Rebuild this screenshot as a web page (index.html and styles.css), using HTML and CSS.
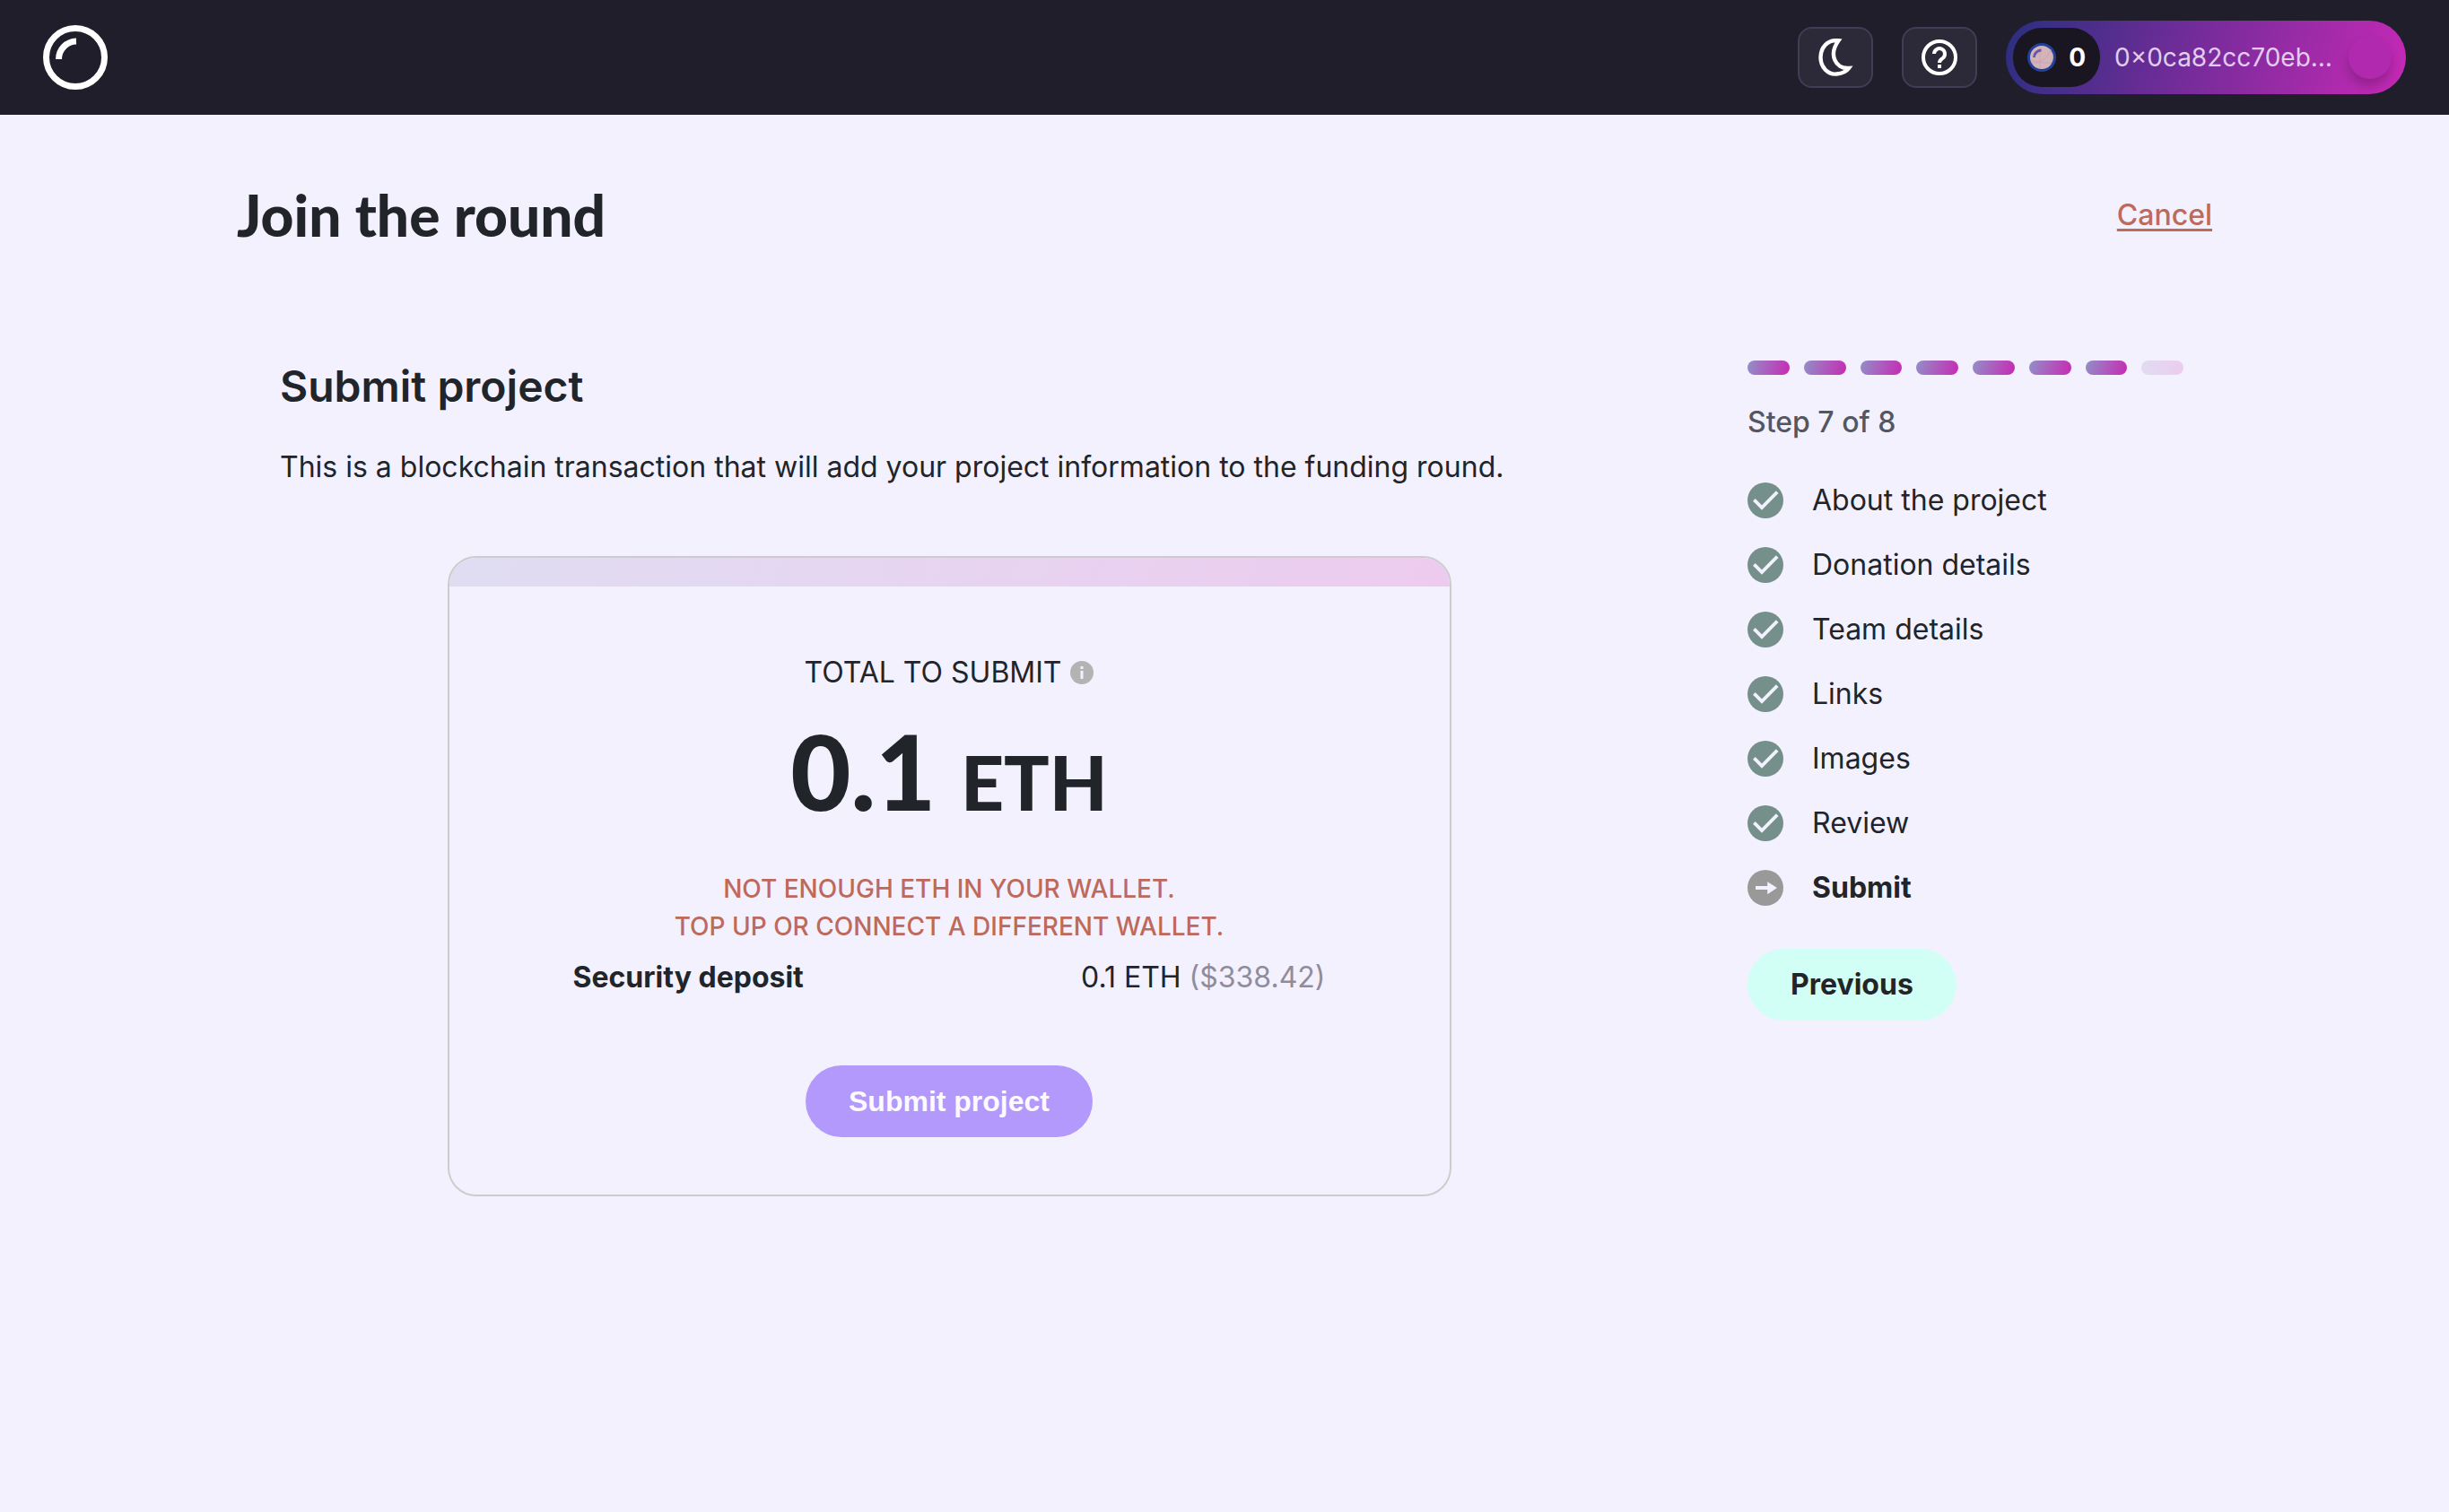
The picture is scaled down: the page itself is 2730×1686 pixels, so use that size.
FILE: index.html
```html
<!DOCTYPE html>
<html lang="en">
<head>
<meta charset="utf-8">
<title>Join the round</title>
<link rel="stylesheet" href="styles.css">
</head>
<body>
<svg class="sprite" aria-hidden="true">
  <symbol id="check" viewBox="0 0 20 20">
    <circle cx="10" cy="10" r="10" fill="#758f8a"/>
    <path d="M3.7 9.7 8 14 16.6 5.3" fill="none" stroke="#f4f1ff" stroke-width="1.9"/>
  </symbol>
  <symbol id="arrow" viewBox="0 0 20 20">
    <circle cx="10" cy="10" r="10" fill="#999"/>
    <path d="M4.5 9h6.6V6.6l5.4 3.4-5.4 3.6V11H4.5z" fill="#f4f1ff"/>
  </symbol>
</svg>
<header class="navbar">
  <a class="logo" href="#" aria-label="Home">
    <svg viewBox="0 0 72 72"><g fill="none" stroke="#fff" stroke-width="7"><circle cx="36" cy="36" r="32.5"/><path d="M17.500 38A20 20 0 0 1 37 18"/></g></svg>
  </a>
  <div class="nav-actions">
    <button class="icon-button" type="button" aria-label="Toggle theme">
      <svg viewBox="0 0 40 42"><path d="M23.500 2.200C11 1 3.500 10 3.500 21s8 19.500 18 18.500c6.500-.6 11-3 13.500-6.500C20 34 12 18 23.500 2.200Z" fill="none" stroke="#fff" stroke-width="4.400" stroke-linejoin="miter"/></svg>
    </button>
    <button class="icon-button" type="button" aria-label="Help">
      <svg viewBox="0 0 40 40"><circle cx="20" cy="20" r="18" fill="none" stroke="#fff" stroke-width="4"/><path d="M14 16a6 6 0 1 1 9.500 5C21.500 22.500 20 23.500 20 26" fill="none" stroke="#fff" stroke-width="4"/><path d="M18 28h4v4h-4z" fill="#fff"/></svg>
    </button>
    <button class="wallet" type="button">
      <span class="balance">
        <svg viewBox="0 0 32 32"><circle cx="16" cy="16" r="14.500" fill="#d3b5b8" stroke="#23409b" stroke-width="3"/><path d="M4 19c8 4 18 1 22-12M14 3v26M5 22h22" stroke="#cfa0c0" fill="none"/><path d="M7.500 16a8 8 0 0 1 8-8" fill="none" stroke="#6a58a8" stroke-width="3"/></svg>
        <span>0</span>
      </span>
      <span class="address">0×0ca82cc70eb…</span>
      <span class="avatar"></span>
    </button>
  </div>
</header>
<main class="page">
  <div class="title-bar">
    <h1>Join the round</h1>
    <a class="cancel" href="#">Cancel</a>
  </div>
  <div class="columns">
    <section class="content">
      <h2>Submit project</h2>
      <p>This is a blockchain transaction that will add your project information to the funding round.</p>
      <div class="card">
        <div class="card-strip"></div>
        <div class="card-body">
          <div class="total-label">TOTAL TO SUBMIT
            <svg viewBox="0 0 26 26"><circle cx="13" cy="13" r="13" fill="#b3b3b3"/><path d="M11.500 6h3v3h-3zM11.500 11h3v9h-3z" fill="#f4f1ff"/></svg>
          </div>
          <div class="total">0.1 <span>ETH</span></div>
          <p class="error">NOT ENOUGH ETH IN YOUR WALLET.<br>TOP UP OR CONNECT A DIFFERENT WALLET.</p>
          <div class="deposit"><strong>Security deposit</strong><span>0.1 ETH <span class="fiat">($338.42)</span></span></div>
          <button class="submit" type="button">Submit project</button>
        </div>
      </div>
    </section>
    <aside class="sidebar">
      <div class="progress"><i></i><i></i><i></i><i></i><i></i><i></i><i></i><i class="todo"></i></div>
      <p class="step-count">Step 7 of 8</p>
      <ol class="steps">
        <li><svg><use href="#check"/></svg>About the project</li>
        <li><svg><use href="#check"/></svg>Donation details</li>
        <li><svg><use href="#check"/></svg>Team details</li>
        <li><svg><use href="#check"/></svg>Links</li>
        <li><svg><use href="#check"/></svg>Images</li>
        <li><svg><use href="#check"/></svg>Review</li>
        <li class="current"><svg><use href="#arrow"/></svg>Submit</li>
      </ol>
      <button class="previous" type="button">Previous</button>
    </aside>
  </div>
</main>
</body>
</html>
```
FILE: styles.css
```css
* { box-sizing: border-box; }
body {
  margin: 0;
  background: #f4f1ff;
  color: #212529;
  font: 400 32px/48px Inter, sans-serif;
}
h1, h2, p, ol { margin: 0; padding: 0; }
button { border: 0; font: inherit; color: inherit; cursor: pointer; }
.sprite { position: absolute; width: 0; height: 0; }

.navbar {
  display: flex;
  align-items: center;
  justify-content: space-between;
  height: 128px;
  padding: 0 48px;
  background: #211e2b;
}
.logo svg { display: block; width: 72px; height: 72px; }
.nav-actions { display: flex; align-items: center; gap: 32px; }
.icon-button {
  display: flex;
  align-items: center;
  justify-content: center;
  width: 84px;
  height: 68px;
  padding: 0;
  border: 2px solid #403d56;
  border-radius: 16px;
  background: #2c2938;
}
.icon-button svg { width: 40px; height: 42px; }
.wallet {
  display: flex;
  align-items: center;
  gap: 16px;
  height: 82px;
  padding: 8px 16px 8px 8px;
  border-radius: 41px;
  background: linear-gradient(109deg, #2a2f80 0%, #5b2d91 30%, #c729b6 100%);
}
.balance {
  display: flex;
  align-items: center;
  gap: 14px;
  height: 66px;
  padding: 0 16px;
  border-radius: 32px;
  background: #191621;
  color: #fff;
  font-size: 28px;
  font-weight: 700;
}
.balance svg { width: 32px; height: 32px; }
.address { color: #e2cdf0; font-size: 28px; }
.avatar {
  width: 48px;
  height: 48px;
  margin-left: 2px;
  border-radius: 50%;
  background: #b129ae;
  box-shadow: 0 8px 12px rgba(0, 0, 0, .2);
}

.page { padding: 0 264px 64px; }
.title-bar {
  display: flex;
  align-items: center;
  justify-content: space-between;
  height: 224px;
}
h1 { font: 900 64px/96px Lato, sans-serif; }
.cancel { color: #bd6a5c; font-weight: 500; text-underline-offset: 4px; }
.columns { display: grid; grid-template-columns: minmax(0, 1fr) 550px; gap: 64px; }
.content { padding: 49px 48px 0; }
h2 { font-size: 48px; font-weight: 600; line-height: 60px; }
.content > p { margin-top: 36px; }
.card {
  width: 75%;
  margin: 75px auto 0;
  overflow: hidden;
  border: 2px solid #ccc;
  border-radius: 32px;
}
.card-strip { height: 32px; background: linear-gradient(109deg, #e0ddf2, #edcbef); }
.card-body {
  display: flex;
  flex-direction: column;
  align-items: center;
  padding: 72px 138px 64px;
}
.total-label { display: flex; align-items: center; gap: 10px; }
.total-label svg { width: 26px; height: 26px; }
.total { margin-top: 14px; font: 900 116px/144px Lato, sans-serif; }
.total span { font-size: 84px; }
.error { margin-top: 26px; color: #bd6a5c; font-size: 28px; font-weight: 500; line-height: 42px; text-align: center; }
.deposit { display: flex; justify-content: space-between; align-self: stretch; margin-top: 12px; }
.deposit strong { font-weight: 700; }
.fiat { color: #8f8c9c; }
.submit, .previous { height: 80px; padding: 0 48px; border-radius: 40px; font-weight: 700; }
.submit { margin-top: 74px; background: #b299fb; color: #fcfaff; font-family: "Liberation Sans", sans-serif; }

.sidebar { padding: 50px 32px 0; }
.progress { display: flex; gap: 16px; }
.progress i { flex: 1; height: 16px; border-radius: 8px; background: linear-gradient(109deg, #9290c8, #c729b3); }
.progress .todo { background: linear-gradient(109deg, #e0ddf2, #edcbef); }
.step-count { margin-top: 29px; color: #545660; font-weight: 500; }
.steps { display: grid; gap: 24px; margin-top: 39px; list-style: none; }
.steps li { display: flex; align-items: center; gap: 32px; }
.steps svg { width: 40px; height: 40px; }
.steps .current { font-weight: 700; }
.previous { margin-top: 44px; background: #d1fff6; }
```
